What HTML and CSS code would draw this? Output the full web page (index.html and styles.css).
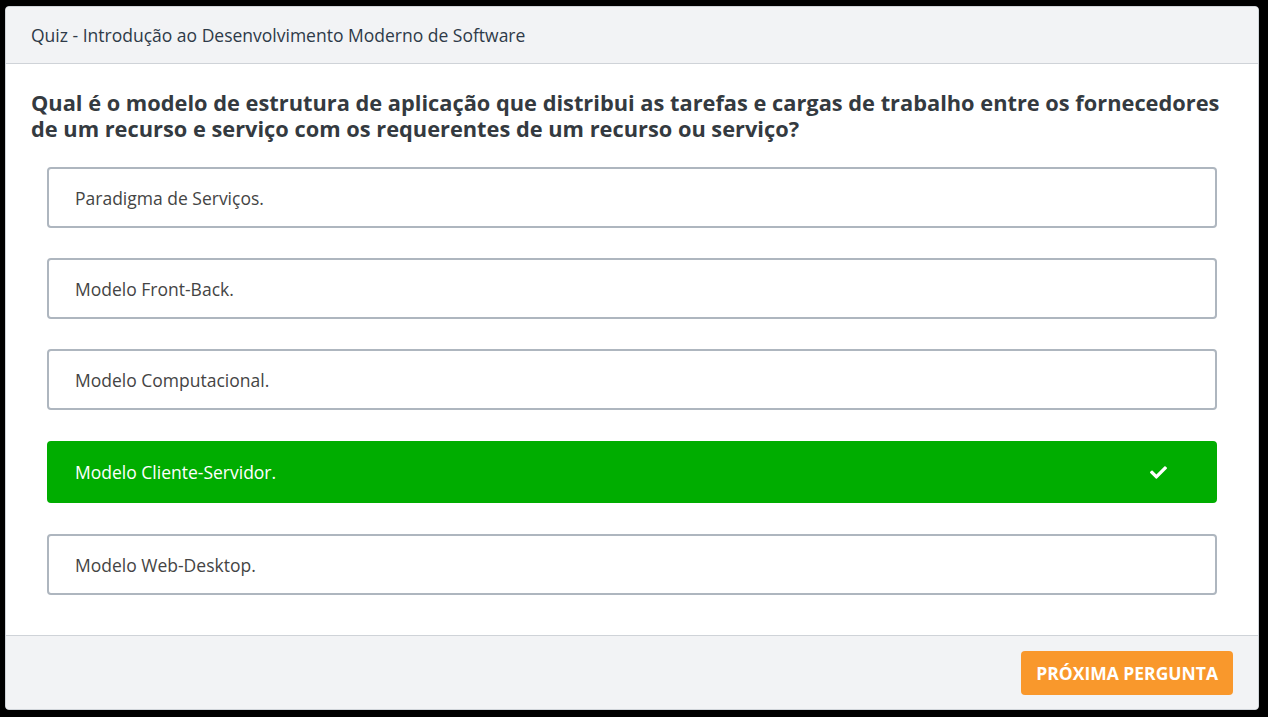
FILE: index.html
```html
<!DOCTYPE html>
<html lang="pt">
<head>
<meta charset="utf-8">
<title>Quiz</title>
<link rel="stylesheet" href="styles.css">
</head>
<body>
<div class="card">
  <header class="card-header">Quiz - Introdução ao Desenvolvimento Moderno de Software</header>
  <main class="card-body">
    <h1 class="question">Qual é o modelo de estrutura de aplicação que distribui as tarefas e cargas de trabalho entre os fornecedores de um recurso e serviço com os requerentes de um recurso ou serviço?</h1>
    <ul class="options">
      <li class="option">Paradigma de Serviços.</li>
      <li class="option">Modelo Front-Back.</li>
      <li class="option">Modelo Computacional.</li>
      <li class="option correct">Modelo Cliente-Servidor.
        <svg class="check" viewBox="0 0 512 512" width="17" height="17"><path fill="#fff" d="M173.9 439.4L7.5 273c-10-10-10-26.2 0-36.2l36.2-36.2c10-10 26.2-10 36.2 0L192 312.7 432.1 72.6c10-10 26.2-10 36.2 0l36.2 36.2c10 10 10 26.2 0 36.2L210.1 439.4c-10 10-26.2 10-36.2 0z"/></svg>
      </li>
      <li class="option">Modelo Web-Desktop.</li>
    </ul>
  </main>
  <footer class="card-footer">
    <button class="next-btn">PRÓXIMA PERGUNTA</button>
  </footer>
</div>
</body>
</html>
```
FILE: styles.css
```css
* { box-sizing: border-box; }
html, body { margin: 0; padding: 0; }
body {
  background: #000;
  font-family: "Open Sans", "Noto Sans", sans-serif;
  padding: 6px 9px 7px 5px;
  height: 717px;
}
.card {
  background: #fff;
  border: 1px solid #d0d4d9;
  border-radius: 4px;
  height: 704px;
  display: flex;
  flex-direction: column;
  overflow: hidden;
}
.card-header {
  background: #f2f3f5;
  border-bottom: 1px solid #cfd3d8;
  height: 57px;
  flex: none;
  padding: 0 25px;
  display: flex;
  align-items: center;
  font-size: 17.5px;
  color: #2e3a48;
}
.card-body {
  flex: 1;
  padding: 26px 36px 0 25px;
}
.question {
  margin: 0;
  font-size: 21.8px;
  font-weight: 700;
  line-height: 26px;
  color: #343a40;
}
.options {
  list-style: none;
  margin: 25px 0 0;
  padding: 0 5px 0 16px;
  display: flex;
  flex-direction: column;
  gap: 30px;
}
.option {
  height: 61px;
  border: 2px solid #aeb6bf;
  border-radius: 4px;
  padding: 0 26px;
  display: flex;
  align-items: center;
  justify-content: space-between;
  font-size: 17.5px;
  color: #444;
}
.option.correct {
  height: 62px;
  margin: 1px 0;
  background: #00ad00;
  border-color: #00ad00;
  color: #fff;
}
.check { margin-right: 22px; }
.card-footer {
  background: #f2f3f5;
  border-top: 1px solid #cfd3d8;
  height: 74px;
  flex: none;
  display: flex;
  justify-content: flex-end;
  align-items: flex-start;
  padding: 15px 25px 0 0;
}
.next-btn {
  background: #f9982c;
  border: none;
  border-radius: 4px;
  color: #fff;
  font-family: "Open Sans", "Noto Sans", sans-serif;
  font-weight: 700;
  font-size: 17.5px;
  height: 44px;
  padding: 0 15px;
  cursor: pointer;
}
```
